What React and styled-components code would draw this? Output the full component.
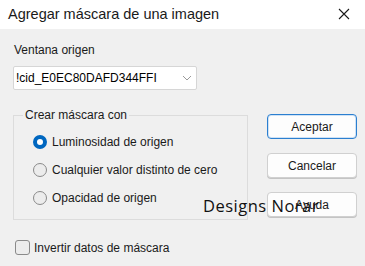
import React from 'react'
import styled, { createGlobalStyle } from 'styled-components'

const Global = createGlobalStyle`
  html, body { margin: 0; padding: 0; }
  body {
    width: 365px;
    height: 266px;
    overflow: hidden;
    background: #f0f0f0;
    font-family: "Liberation Sans", Arial, sans-serif;
    color: #000;
  }
`

const Window = styled.div`
  position: relative;
  width: 365px;
  height: 266px;
  background: #f0f0f0;
`

const TitleBar = styled.div`
  height: 29px;
  background: #fff;
  display: flex;
  align-items: center;
  justify-content: space-between;
  padding: 0 15px 2px 8px;
  box-sizing: border-box;
  font-size: 14.5px;
  color: #1a1a1a;
`

const Body = styled.div`
  display: flex;
  padding: 14px 9px 0 13px;
  gap: 19px;
`

const LeftCol = styled.div`
  width: 235px;
  display: flex;
  flex-direction: column;
`

const Label = styled.div`
  font-size: 12px;
  color: #1a1a1a;
  line-height: 14px;
  padding-left: 1px;
`

const Select = styled.div`
  margin-top: 9px;
  width: 184px;
  height: 24px;
  box-sizing: border-box;
  background: #fff;
  border: 1px solid #d6d6d6;
  border-radius: 2px;
  display: flex;
  align-items: center;
  justify-content: space-between;
  padding: 0 4px 0 2px;
  font-size: 12px;
`

const Group = styled.fieldset`
  margin: 18px 0 0 0;
  padding: 10px 0 6px 19px;
  width: 235px;
  height: 112px;
  box-sizing: border-box;
  border: 1px solid #dcdcdc;
  border-radius: 0;
  display: flex;
  flex-direction: column;
  gap: 8px;
`

const Legend = styled.legend`
  font-size: 12px;
  padding: 0 2px;
  margin-left: -10px;
  color: #1a1a1a;
`

const Option = styled.label`
  display: flex;
  align-items: center;
  gap: 5px;
  font-size: 12px;
  height: 20px;
  color: #1a1a1a;
`

const Radio = styled.span`
  width: 14px;
  height: 14px;
  box-sizing: border-box;
  border-radius: 50%;
  border: ${p => (p.$on ? '4px solid #0067c0' : '1px solid #8a8a8a')};
  background: ${p => (p.$on ? '#fff' : '#ececec')};
`

const CheckRow = styled.label`
  display: flex;
  align-items: center;
  gap: 4px;
  margin-top: 20px;
  margin-left: 2px;
  font-size: 12px;
  color: #1a1a1a;
`

const Box = styled.span`
  width: 15px;
  height: 15px;
  box-sizing: border-box;
  border: 1px solid #8a8a8a;
  border-radius: 3px;
  background: #ececec;
`

const RightCol = styled.div`
  display: flex;
  flex-direction: column;
  padding-top: 71px;
  gap: 14px;
`

const Button = styled.button`
  width: 90px;
  height: 25px;
  box-sizing: border-box;
  background: #fdfdfd;
  border: 1px solid ${p => (p.$primary ? '#2b7fd0' : '#d0d0d0')};
  box-shadow: ${p => (p.$primary ? 'inset 0 0 0 1px #cfe2f5' : '0 1px 0 #c4c4c4')};
  border-radius: 4px;
  font-family: "Liberation Sans", Arial, sans-serif;
  font-size: 12px;
  color: #1a1a1a;
  padding: 0;
`

const Watermark = styled.div`
  position: absolute;
  left: 203px;
  top: 194px;
  font-family: "Open Sans", "Liberation Sans", sans-serif;
  font-size: 16.5px;
  letter-spacing: 0.5px;
  color: #111;
  pointer-events: none;
`

function App() {
  return (
    <Window>
      <Global />
      <TitleBar>
        <span>Agregar máscara de una imagen</span>
        <svg width="12" height="12" viewBox="0 0 12 12">
          <path d="M1 1L11 11M11 1L1 11" stroke="#1a1a1a" strokeWidth="1.1" />
        </svg>
      </TitleBar>
      <Body>
        <LeftCol>
          <Label>Ventana origen</Label>
          <Select>
            <span>!cid_E0EC80DAFD344FFI</span>
            <svg width="10" height="6" viewBox="0 0 10 6">
              <path d="M1 1L5 5L9 1" fill="none" stroke="#9a9a9a" strokeWidth="1" />
            </svg>
          </Select>
          <Group>
            <Legend>Crear máscara con</Legend>
            <Option><Radio $on />Luminosidad de origen</Option>
            <Option><Radio />Cualquier valor distinto de cero</Option>
            <Option><Radio />Opacidad de origen</Option>
          </Group>
          <CheckRow><Box />Invertir datos de máscara</CheckRow>
        </LeftCol>
        <RightCol>
          <Button $primary>Aceptar</Button>
          <Button>Cancelar</Button>
          <Button>Ayuda</Button>
        </RightCol>
      </Body>
      <Watermark>Designs Norar</Watermark>
    </Window>
  )
}

export default App
